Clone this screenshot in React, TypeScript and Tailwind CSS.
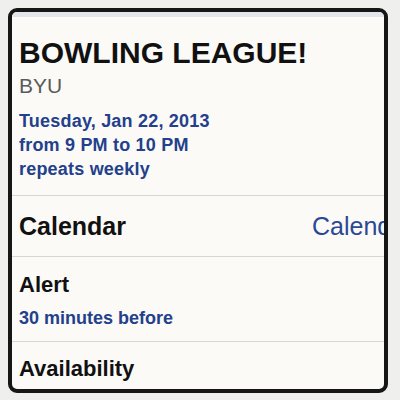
export default function App() {
  return (
    <main className="w-[400px] h-[400px] bg-[#efefed] pt-2 pl-2 overflow-hidden font-['Liberation_Sans',Arial,sans-serif]">
      <div className="w-[380px] h-[385px] border-4 border-[#161616] rounded-[9px] bg-[#fbfaf6] overflow-hidden flex flex-col">
        <div className="h-[5px] bg-[#e2e5e9] shrink-0" />

        <section className="pl-[7px] pt-[21px] pb-[14px] border-b border-[#d6d6d4]">
          <h1 className="text-[30px] leading-[30px] font-bold text-[#111]">
            BOWLING LEAGUE!
          </h1>
          <p className="mt-[7px] text-[21px] leading-[21px] text-[#5a5a5a]">BYU</p>
          <div className="mt-[13px] text-[18px] leading-[24px] font-bold text-[#23408c] tracking-[0.2px]">
            <p>Tuesday, Jan 22, 2013</p>
            <p>from 9 PM to 10 PM</p>
            <p>repeats weekly</p>
          </div>
        </section>

        <div className="h-[61px] shrink-0 flex items-center pl-[7px] border-b border-[#d6d6d4] whitespace-nowrap">
          <span className="w-[293px] shrink-0 text-[25px] leading-[25px] font-bold text-[#111]">
            Calendar
          </span>
          <span className="text-[25px] leading-[25px] text-[#2a4894]">Calendar</span>
        </div>

        <section className="pl-[7px] pt-[17px] pb-[11px] border-b border-[#d6d6d4]">
          <p className="text-[22px] leading-[22px] font-bold text-[#111]">Alert</p>
          <p className="mt-[10px] text-[18px] leading-[24px] font-bold text-[#23408c]">
            30 minutes before
          </p>
        </section>

        <section className="pl-[7px] pt-[16px]">
          <p className="text-[22px] leading-[22px] font-bold text-[#111]">Availability</p>
        </section>
      </div>
    </main>
  );
}
